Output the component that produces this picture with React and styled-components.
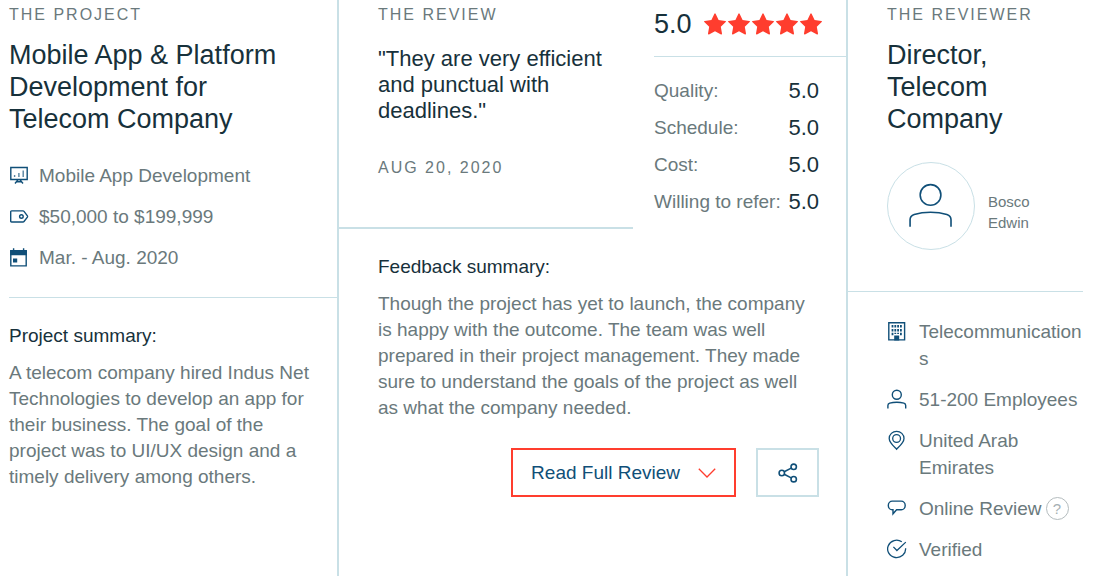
import React from "react";
import styled, { createGlobalStyle } from "styled-components";

const colors = {
  dark: "#17313b",
  grey: "#6a797c",
  navy: "#104f78",
  red: "#ff3d2e",
  line: "#c9e0e6",
};

const GlobalStyle = createGlobalStyle`
  * {
    box-sizing: border-box;
    margin: 0;
    padding: 0;
  }
  body {
    background: #fff;
    color: ${colors.grey};
    font-family: "Liberation Sans", Arial, sans-serif;
    font-size: 19px;
    line-height: 26px;
  }
`;

const Review = styled.article`
  display: grid;
  grid-template-columns: minmax(0, 330fr) minmax(0, 509fr) minmax(0, 235fr);
  min-height: 100vh;
  padding: 0 13px 0 9px;
`;

const Column = styled.section`
  border-right: ${(props) => (props.$last ? "none" : `2px solid ${colors.line}`)};
`;

const Label = styled.h2`
  font-size: 16px;
  font-weight: normal;
  line-height: 20px;
  letter-spacing: 2px;
  text-transform: uppercase;
`;

const Title = styled.h3`
  color: ${colors.dark};
  font-size: 27px;
  font-weight: normal;
  line-height: 32px;
  margin-top: 14px;
`;

const ProjectInfo = styled.div`
  padding: 5px 24px 26px 0;
  border-bottom: 1px solid ${colors.line};
`;

const ReviewerInfo = styled.div`
  padding: 5px 0 41px 39px;
  border-bottom: 1px solid ${colors.line};
`;

const List = styled.ul`
  display: flex;
  flex-direction: column;
  gap: 14px;
  list-style: none;
  line-height: 27px;
`;

const ProjectList = styled(List)`
  margin-top: 27px;
`;

const ReviewerList = styled(List)`
  padding: 26px 0 0 39px;
`;

const Item = styled.li`
  display: grid;
  grid-template-columns: 20px minmax(0, 1fr);
  column-gap: ${(props) => (props.$wide ? "12px" : "10px")};
  overflow-wrap: anywhere;

  svg {
    height: 27px;
  }
`;

const Icon = styled.svg`
  display: block;
  fill: none;
  stroke: ${(props) => props.$color || colors.navy};
  stroke-width: ${(props) => props.$weight || 1.4};
`;

const Summary = styled.div`
  padding: ${(props) => (props.$feedback ? "25px 27px 0 39px" : "25px 24px 0 0")};
`;

const SummaryTitle = styled.h4`
  color: ${colors.dark};
  font-weight: normal;
  margin-bottom: 11px;
`;

const ReviewTop = styled.div`
  display: grid;
  grid-template-columns: minmax(0, 1fr) 192px;
  column-gap: 21px;
`;

const QuoteBox = styled.div`
  padding: 5px 20px 49px 39px;
  border-bottom: 2px solid ${colors.line};
`;

const Quote = styled.blockquote`
  color: ${colors.dark};
  font-size: 22px;
  margin: 21px 0 34px;
`;

const Overall = styled.div`
  display: flex;
  align-items: center;
  gap: 12px;
  height: 57px;
  padding-bottom: 8px;
  border-bottom: 1px solid ${colors.line};
  color: ${colors.dark};
  font-size: 27px;
`;

const Stars = styled.span`
  display: flex;
  gap: 2px;
`;

const Scores = styled.dl`
  display: grid;
  grid-template-columns: 1fr auto;
  row-gap: 11px;
  padding: 21px 27px 0 0;

  dd {
    color: ${colors.dark};
    font-size: 22px;
  }
`;

const Actions = styled.div`
  display: flex;
  justify-content: flex-end;
  gap: 20px;
  margin-top: 27px;
`;

const Button = styled.button`
  display: flex;
  align-items: center;
  justify-content: center;
  gap: 18px;
  width: ${(props) => (props.$share ? "63px" : "auto")};
  height: 49px;
  padding: ${(props) => (props.$share ? "0" : "0 18px")};
  background: #fff;
  border: 2px solid ${(props) => (props.$share ? colors.line : colors.red)};
  color: ${colors.navy};
  font: inherit;
  cursor: pointer;
`;

const Person = styled.div`
  display: flex;
  align-items: center;
  gap: 13px;
  margin-top: 27px;
`;

const Avatar = styled.div`
  display: flex;
  align-items: center;
  justify-content: center;
  flex: none;
  width: 88px;
  height: 88px;
  border: 1px solid ${colors.line};
  border-radius: 50%;
`;

const Name = styled.p`
  width: min-content;
  padding-top: 12px;
  font-size: 15px;
  line-height: 21px;
`;

const Online = styled.span`
  display: flex;
  align-items: center;
  gap: 4px;
`;

const Help = styled.button`
  width: 23px;
  height: 23px;
  background: none;
  border: 1px solid #b4bcbe;
  border-radius: 50%;
  color: #a6b0b3;
  font: inherit;
  font-size: 15px;
  line-height: 21px;
`;

const BoardIcon = () => (
  <Icon width="20" viewBox="0 0 20 20" aria-hidden="true">
    <path d="M1.8 2h16.4v12H1.8zM6 18l3.300-4M14 18l-3.300-4M7.300 16.200h5.400" />
    <path d="M5.600 9.600v2M9.900 7.600v4M14.200 5v6.600" strokeOpacity=".7" />
  </Icon>
);

const TagIcon = () => (
  <Icon width="20" viewBox="0 0 20 20" aria-hidden="true">
    <path d="M2.600 4.400h11.400q.600 0 1 .500l3.400 4.500q.400.600 0 1.200l-3.400 4.400q-.400.500-1 .500H2.600q-.900 0-.900-.900V5.300q0-.900.900-.900z" />
    <circle cx="12.400" cy="10" r="1.800" />
  </Icon>
);

const CalendarIcon = () => (
  <Icon width="20" viewBox="0 0 20 20" aria-hidden="true">
    <path d="M1.8 3.2h15.4v15.2H1.8z" />
    <path d="M1.1 2.8h16.8v5H1.1zM4 11h4.2v4H4z" fill={colors.navy} stroke="none" />
    <path d="M4.6 .8v2.400M14.600.8v2.400" />
  </Icon>
);

const BuildingIcon = () => (
  <Icon width="20" viewBox="0 0 20 20" aria-hidden="true">
    <path d="M1.8 1.2h15.8v17.2H1.8z" />
    <path d="M5.5 3.6v10.4M8.300 3.6v9M11.100 3.6v9M13.900 3.6v10.4" strokeWidth="1.8" strokeDasharray="2.5 1.3" />
    <path d="M7.2 19v-5h5v5z" fill={colors.navy} stroke="none" />
  </Icon>
);

const PersonIcon = ({ size = 20, weight }) => (
  <Icon width={size} viewBox="0 0 20 20" $weight={weight} aria-hidden="true">
    <circle cx="9.8" cy="5.2" r="4.5" />
    <path d="M.9 19v-3q0-1.700 1.800-2.300 3.200-1 7.100-1t7.100 1q1.800.600 1.800 2.300v3" />
  </Icon>
);

const PinIcon = () => (
  <Icon width="20" viewBox="0 0 20 20" $weight={1.300} aria-hidden="true">
    <path d="M9.600 18.700C7.200 16.200 2.200 12.200 2.200 8a7.400 7.200 0 0 1 14.800 0c0 4.200-5 8.200-7.400 10.700z" />
    <circle cx="9.600" cy="8" r="3.900" />
  </Icon>
);

const BubbleIcon = () => (
  <Icon width="20" viewBox="0 0 20 20" $weight={1.4} aria-hidden="true">
    <path d="M5.300 2.600h8.900a4 4.300 0 0 1 0 8.600H9.600L6 15.300v-4.100h-.700a4 4.300 0 0 1 0-8.600z" />
  </Icon>
);

const CheckIcon = () => (
  <Icon width="20" viewBox="0 0 20 20" $weight={1.300} aria-hidden="true">
    <path d="M14.800 2.300A9 8.700 0 1 0 18.600 8.800" />
    <path d="M6.400 7.400l3.500 3.600L18.800 2.600" />
  </Icon>
);

const ChevronIcon = () => (
  <Icon width="18" height="18" viewBox="0 0 18 18" $color={colors.red} $weight={1.3}>
    <path d="M.8 4.8L9 13l8.2-8.2" />
  </Icon>
);

const ShareIcon = () => (
  <Icon width="20" height="20" viewBox="0 0 20 20" $weight={1.6}>
    <circle cx="3.800" cy="10" r="2.700" />
    <circle cx="15.700" cy="3.800" r="2.700" />
    <circle cx="15.700" cy="16.200" r="2.700" />
    <path d="M6.200 8.800l7-3.700M6.200 11.200l7 3.700" />
  </Icon>
);

const Star = () => (
  <svg width="22" height="22" viewBox="0 0 22 22" fill={colors.red} aria-hidden="true">
    <path d="M10.400.7q.6-1 1.200 0l3 6.300 6.700.9q1.200.3.4 1.200l-4.900 4.700 1.200 6.800q0 1.200-1 .8L11 18.200l-6 3.200q-1 .4-1-.8l1.200-6.800L.3 9.100Q-.5 8.200.7 7.900L7.400 7z" />
  </svg>
);

const scores = [
  ["Quality:", "5.0"],
  ["Schedule:", "5.0"],
  ["Cost:", "5.0"],
  ["Willing to refer:", "5.0"],
];

export default function App() {
  return (
    <>
      <GlobalStyle />
      <Review>
        <Column>
          <ProjectInfo>
            <Label>The Project</Label>
            <Title>Mobile App &amp; Platform Development for Telecom Company</Title>
            <ProjectList>
              <Item><BoardIcon />Mobile App Development</Item>
              <Item><TagIcon />$50,000 to $199,999</Item>
              <Item><CalendarIcon />Mar. - Aug. 2020</Item>
            </ProjectList>
          </ProjectInfo>
          <Summary>
            <SummaryTitle>Project summary:</SummaryTitle>
            <p>
              A telecom company hired Indus Net Technologies to develop an app for
              their business. The goal of the project was to UI/UX design and a
              timely delivery among others.
            </p>
          </Summary>
        </Column>

        <Column>
          <ReviewTop>
            <QuoteBox>
              <Label>The Review</Label>
              <Quote>"They are very efficient and punctual with deadlines."</Quote>
              <Label as="p">Aug 20, 2020</Label>
            </QuoteBox>
            <div>
              <Overall>
                5.0
                <Stars role="img" aria-label="5 out of 5 stars">
                  {[1, 2, 3, 4, 5].map((n) => (
                    <Star key={n} />
                  ))}
                </Stars>
              </Overall>
              <Scores>
                {scores.map(([name, score]) => (
                  <React.Fragment key={name}>
                    <dt>{name}</dt>
                    <dd>{score}</dd>
                  </React.Fragment>
                ))}
              </Scores>
            </div>
          </ReviewTop>
          <Summary $feedback>
            <SummaryTitle>Feedback summary:</SummaryTitle>
            <p>
              Though the project has yet to launch, the company is happy with the
              outcome. The team was well prepared in their project management. They
              made sure to understand the goals of the project as well as what the
              company needed.
            </p>
            <Actions>
              <Button type="button">
                Read Full Review
                <ChevronIcon />
              </Button>
              <Button type="button" $share aria-label="Share">
                <ShareIcon />
              </Button>
            </Actions>
          </Summary>
        </Column>

        <Column $last>
          <ReviewerInfo>
            <Label>The Reviewer</Label>
            <Title>Director, Telecom Company</Title>
            <Person>
              <Avatar>
                <PersonIcon size={46} weight={0.7} />
              </Avatar>
              <Name>Bosco Edwin</Name>
            </Person>
          </ReviewerInfo>
          <ReviewerList>
            <Item $wide><BuildingIcon />Telecommunications</Item>
            <Item $wide><PersonIcon />51-200 Employees</Item>
            <Item $wide><PinIcon />United Arab Emirates</Item>
            <Item $wide>
              <BubbleIcon />
              <Online>
                Online Review
                <Help type="button" aria-label="About online reviews">?</Help>
              </Online>
            </Item>
            <Item $wide><CheckIcon />Verified</Item>
          </ReviewerList>
        </Column>
      </Review>
    </>
  );
}
